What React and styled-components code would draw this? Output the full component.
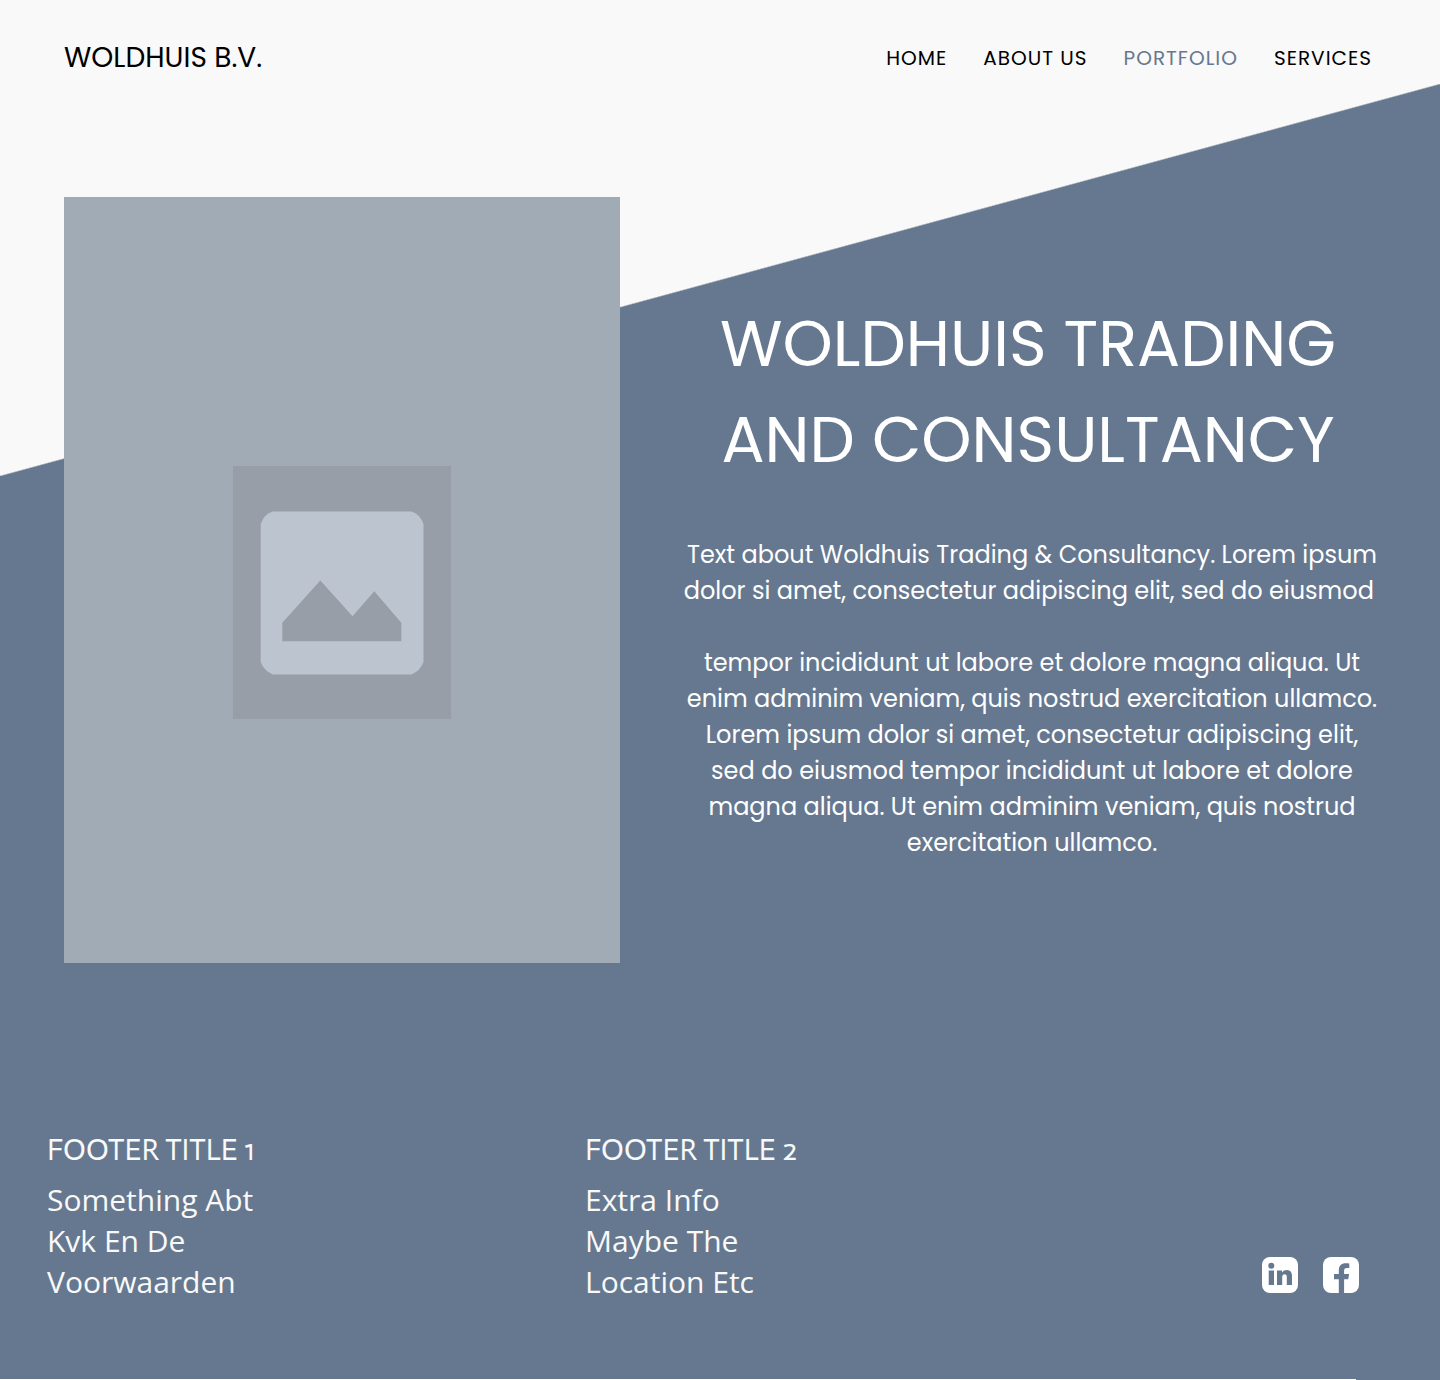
import React from 'react';
import styled, { createGlobalStyle } from 'styled-components';

const Global = createGlobalStyle`
  * { box-sizing: border-box; }
  body { margin: 0; background: #66788f; }
  h1, h2, p { margin: 0; font-weight: 400; }
`;

const Page = styled.div`
  min-height: 100vh;
  display: flex;
  flex-direction: column;
  font-family: Poppins, Inter, "Liberation Sans", sans-serif;
  color: #fff;
  background: #66788f;
`;

const Top = styled.div`
  background:
    linear-gradient(#f9f9f9, #f9f9f9) top / 100% 84px no-repeat,
    linear-gradient(to bottom right, #f9f9f9 49.9%, #66788f 50.1%) 0 84px / 100% 392px no-repeat;
`;

const Header = styled.header`
  display: flex;
  justify-content: space-between;
  align-items: center;
  height: 116px;
  padding: 0 68px 0 64px;
`;

const Brand = styled.a`
  font-size: 28px;
  color: #000;
  text-decoration: none;
`;

const Nav = styled.nav`
  display: flex;
  gap: 36px;
`;

const NavLink = styled.a`
  font-size: 20px;
  letter-spacing: 1px;
  text-decoration: none;
  color: ${(p) => (p.$active ? '#66788f' : '#000')};
`;

const Hero = styled.main`
  display: grid;
  grid-template-columns: 556fr 704fr;
  gap: 60px;
  padding: 81px 56px 0 64px;
`;

const Picture = styled.div`
  height: 766px;
  padding-top: 25px;
  display: flex;
  align-items: center;
  justify-content: center;
  background: #a1abb6;
`;

const Copy = styled.section`
  padding-top: 99px;
  text-align: center;
`;

const Title = styled.h1`
  padding-right: 8px;
  font-size: 64px;
  line-height: 96px;
`;

const Text = styled.div`
  display: flex;
  flex-direction: column;
  gap: 36px;
  margin-top: 49px;
  font-size: 24px;
  line-height: 36px;
`;

const Footer = styled.footer`
  display: grid;
  grid-template-columns: 538fr 677fr auto;
  padding: 167px 81px 76px 47px;
  font-family: "Open Sans", sans-serif;
  color: #f9f9f9;
`;

const FooterTitle = styled.h2`
  margin-bottom: 9px;
  font-family: Actor, Catamaran, "Open Sans", sans-serif;
  font-variant-numeric: oldstyle-nums;
  font-size: 30px;
  line-height: 40px;
`;

const Line = styled.p`
  font-size: 30px;
  line-height: 41px;
`;

const Socials = styled.div`
  display: flex;
  gap: 25px;
  align-self: end;
  padding-bottom: 9px;
`;

const SocialLink = styled.a`
  display: block;
  height: 36px;
`;

const Rule = styled.div`
  width: calc(100% - 84px);
  height: 1px;
  margin-top: auto;
  background: #fff;
`;

function Placeholder() {
  return (
    <svg width="218" height="253" viewBox="0 0 218 253" role="img" aria-label="Image placeholder">
      <rect width="218" height="253" fill="#979ea8" />
      <path fill="#bcc4cf" d="M40 45.5H178.500Q187 48 190.500 58V196Q187 205 178.500 208.500H40Q31 205 27.700 196V58Q31 48 40 45.500Z" />
      <path fill="#979ea8" d="M49.300 175.300V156.700L87.300 114.500L119.500 150.200L141.300 125.300L168.300 156.700V175.300Z" />
    </svg>
  );
}

function LinkedIn() {
  return (
    <svg width="36" height="36" viewBox="0 0 36 36" aria-hidden="true">
      <rect width="36" height="36" rx="8" fill="#fff" />
      <g fill="#66788f">
        <circle cx="9.300" cy="8.700" r="3" />
        <path d="M6.700 13.500h5.300V28H6.700zM15 13.500h5v2c1-1.500 2.700-2.400 4.700-2.400 3.600 0 5.300 2.300 5.300 6V28h-5.200v-8c0-1.800-.7-2.700-2.200-2.700s-2.400 1.100-2.400 2.900V28H15z" />
      </g>
    </svg>
  );
}

function Facebook() {
  return (
    <svg width="36" height="36" viewBox="0 0 36 36" aria-hidden="true">
      <rect width="36" height="36" rx="8" fill="#fff" />
      <path fill="#66788f" d="M15.800 36V22.300H11v-5.200h4.800v-3.800c0-4.600 2.700-7.100 6.800-7.100 1.500 0 2.700.1 3.700.3v4.600h-2.300c-2.200 0-2.900 1-2.900 2.700v3.300h5l-.8 5.200h-4.200V36z" />
    </svg>
  );
}

export default function App() {
  return (
    <Page>
      <Global />
      <Top>
        <Header>
          <Brand href="#">WOLDHUIS B.V.</Brand>
          <Nav>
            <NavLink href="#">HOME</NavLink>
            <NavLink href="#">ABOUT US</NavLink>
            <NavLink href="#" $active>PORTFOLIO</NavLink>
            <NavLink href="#">SERVICES</NavLink>
          </Nav>
        </Header>
        <Hero>
          <Picture><Placeholder /></Picture>
          <Copy>
            <Title>WOLDHUIS TRADING<br />AND CONSULTANCY</Title>
            <Text>
              <p>
                Text about Woldhuis Trading &amp; Consultancy. Lorem ipsum<br />
                dolor si amet, consectetur adipiscing elit, sed do eiusmod&nbsp;
              </p>
              <p>
                tempor incididunt ut labore et dolore magna aliqua. Ut<br />
                enim adminim veniam, quis nostrud exercitation ullamco.<br />
                Lorem ipsum dolor si amet, consectetur adipiscing elit,<br />
                sed do eiusmod tempor incididunt ut labore et dolore<br />
                magna aliqua. Ut enim adminim veniam, quis nostrud<br />
                exercitation ullamco.
              </p>
            </Text>
          </Copy>
        </Hero>
      </Top>
      <Footer>
        <div>
          <FooterTitle>FOOTER TITLE 1</FooterTitle>
          <Line>Something Abt</Line>
          <Line>Kvk En De</Line>
          <Line>Voorwaarden</Line>
        </div>
        <div>
          <FooterTitle>FOOTER TITLE 2</FooterTitle>
          <Line>Extra Info</Line>
          <Line>Maybe The</Line>
          <Line>Location Etc</Line>
        </div>
        <Socials>
          <SocialLink href="#" aria-label="LinkedIn"><LinkedIn /></SocialLink>
          <SocialLink href="#" aria-label="Facebook"><Facebook /></SocialLink>
        </Socials>
      </Footer>
      <Rule />
    </Page>
  );
}
